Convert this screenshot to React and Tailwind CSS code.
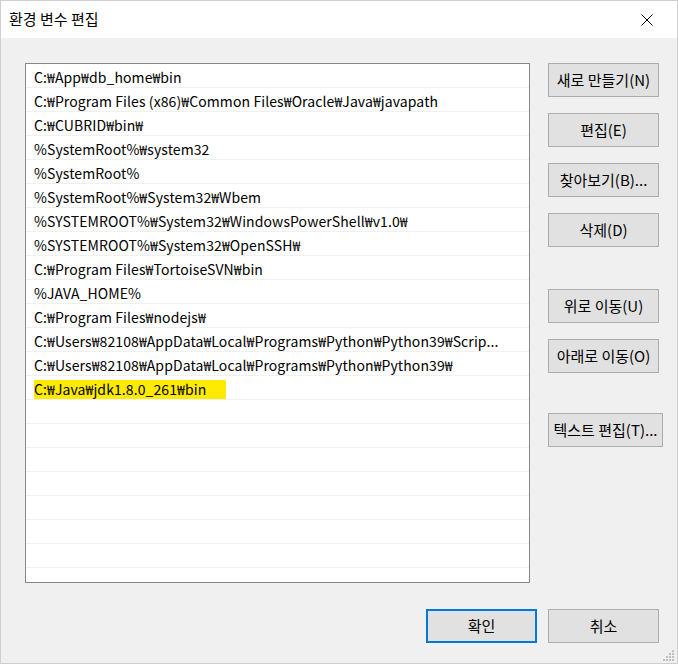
import React from 'react';

const paths = [
  'C:₩App₩db_home₩bin',
  'C:₩Program Files (x86)₩Common Files₩Oracle₩Java₩javapath',
  'C:₩CUBRID₩bin₩',
  '%SystemRoot%₩system32',
  '%SystemRoot%',
  '%SystemRoot%₩System32₩Wbem',
  '%SYSTEMROOT%₩System32₩WindowsPowerShell₩v1.0₩',
  '%SYSTEMROOT%₩System32₩OpenSSH₩',
  'C:₩Program Files₩TortoiseSVN₩bin',
  '%JAVA_HOME%',
  'C:₩Program Files₩nodejs₩',
  'C:₩Users₩82108₩AppData₩Local₩Programs₩Python₩Python39₩Scrip...',
  'C:₩Users₩82108₩AppData₩Local₩Programs₩Python₩Python39₩',
];

const font = { fontFamily: '"Noto Sans CJK KR", "Noto Sans", sans-serif' };

function Btn({ children, className = '', primary }) {
  return (
    <button
      className={`h-[34px] flex items-center justify-center bg-[#e1e1e1] text-[15px] text-black whitespace-nowrap ${
        primary ? 'border-2 border-[#0078d7]' : 'border border-[#adadad]'
      } ${className}`}
    >
      {children}
    </button>
  );
}

export default function App() {
  const empty = Array.from({ length: 8 });
  return (
    <div
      style={font}
      className="w-[678px] h-[664px] bg-[#f0f0f0] border border-[#cfcfcf] flex flex-col relative overflow-hidden"
    >
      {/* Title bar */}
      <div className="h-[37px] bg-white flex items-center justify-between pl-[8px] pr-[24px] shrink-0">
        <span className="text-[15px] text-black">환경 변수 편집</span>
        <svg width="12" height="12" viewBox="0 0 12 12" className="mt-[1px]">
          <path d="M0.5 0.5 L11.5 11.5 M11.5 0.5 L0.5 11.5" stroke="#000" strokeWidth="1" />
        </svg>
      </div>

      <div className="flex pl-[24px] pt-[25px]">
        {/* List */}
        <div className="w-[505px] h-[520px] bg-white border border-[#828790] overflow-hidden">
          {paths.map((p) => (
            <div
              key={p}
              className="h-[24px] border-b border-[#f0f0f0] flex items-center pl-[8px] pt-[3px] text-[14px] tracking-[0.1px] text-black whitespace-nowrap overflow-hidden"
            >
              {p}
            </div>
          ))}
          <div className="h-[24px] border-b border-[#f0f0f0] flex items-center pl-[8px] pt-[3px] text-[14px] tracking-[0.1px] text-black whitespace-nowrap">
            <span className="bg-[#ffea00] pr-[20px] leading-[19px]">C:₩Java₩jdk1.8.0_261₩bin</span>
          </div>
          {empty.map((_, i) => (
            <div key={i} className="h-[24px] border-b border-[#f0f0f0]" />
          ))}
        </div>

        {/* Side buttons */}
        <div className="ml-[18px] flex flex-col">
          <Btn className="w-[111px]">새로 만들기(N)</Btn>
          <Btn className="w-[111px] mt-[16px]">편집(E)</Btn>
          <Btn className="w-[111px] mt-[16px]">찾아보기(B)...</Btn>
          <Btn className="w-[111px] mt-[16px]">삭제(D)</Btn>
          <Btn className="w-[111px] mt-[42px]">위로 이동(U)</Btn>
          <Btn className="w-[111px] mt-[16px]">아래로 이동(O)</Btn>
          <Btn className="w-[115px] mt-[40px]">텍스트 편집(T)...</Btn>
        </div>
      </div>

      {/* Bottom buttons */}
      <div className="flex justify-end gap-[11px] pr-[18px] mt-[26px]">
        <Btn primary className="w-[111px]">확인</Btn>
        <Btn className="w-[111px]">취소</Btn>
      </div>

      {/* Size grip */}
      <svg width="12" height="12" viewBox="0 0 12 12" className="absolute right-[2px] bottom-[2px]">
        {[[9, 1], [6, 4], [9, 4], [3, 7], [6, 7], [9, 7], [0, 10], [3, 10], [6, 10], [9, 10]].map(([x, y], i) => (
          <rect key={i} x={x} y={y} width="2" height="2" fill="#bfbfbf" />
        ))}
      </svg>
    </div>
  );
}
